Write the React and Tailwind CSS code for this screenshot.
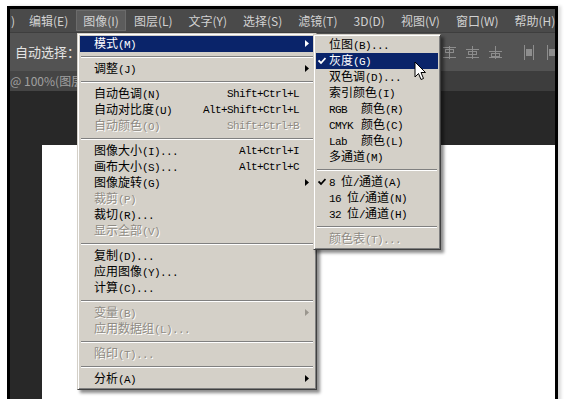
import React from "react";

const CJK = /([\u4e00-\u9fff：]+)/;
const MONO = "text-[11px] tracking-[-0.6px] font-['Liberation_Mono',monospace]";

function Label({ text, prefix }) {
  const parts = text.split(CJK).filter(Boolean);
  return (
    <span className="flex items-baseline whitespace-pre leading-[16px]">
      {prefix && <span className={`inline-block w-[32px] ${MONO}`}>{prefix}</span>}
      {parts.map((p, i) =>
        CJK.test(p) ? (
          <span key={i} className="text-[12px] font-['Noto_Sans_CJK_SC',sans-serif]">{p}</span>
        ) : (
          <span key={i} className={MONO}>{p}</span>
        )
      )}
    </span>
  );
}

function Arrow({ color }) {
  return (
    <svg width="4" height="7" viewBox="0 0 4 7" className="absolute right-[5px] top-[4px]">
      <path d="M0 0 L4 3.5 L0 7 Z" fill={color} />
    </svg>
  );
}

function Check({ color }) {
  return (
    <svg width="8" height="8" viewBox="0 0 8 8" className="absolute left-[2px] top-[4px]">
      <path d="M0.5 3.5 L3 6 L7.5 1" stroke={color} strokeWidth="1.8" fill="none" />
    </svg>
  );
}

function Sep() {
  return (
    <div className="h-[9px] flex items-center px-[1px]">
      <div className="w-full h-[2px] border-t border-t-[#808080] border-b border-b-white" />
    </div>
  );
}

function Item({ it, pl }) {
  const color = it.hl
    ? "text-white bg-[#0a246a]"
    : it.dis
    ? "text-[#8f8b84] [text-shadow:1px_1px_0_#ffffff]"
    : "text-black";
  return (
    <div className={`relative h-[16px] flex items-center ${pl} ${color}`}>
      {it.check && <Check color={it.hl ? "#ffffff" : "#000000"} />}
      <Label text={it.t} prefix={it.prefix} />
      {it.sc && <span className={`ml-auto pr-[15px] leading-[16px] ${MONO}`}>{it.sc}</span>}
      {it.arrow && <Arrow color={it.hl ? "#ffffff" : it.dis ? "#9a968e" : "#000000"} />}
    </div>
  );
}

const mainItems = [
  { t: "模式(M)", arrow: true, hl: true },
  "sep",
  { t: "调整(J)", arrow: true },
  "sep",
  { t: "自动色调(N)", sc: "Shift+Ctrl+L" },
  { t: "自动对比度(U)", sc: "Alt+Shift+Ctrl+L" },
  { t: "自动颜色(O)", sc: "Shift+Ctrl+B", dis: true },
  "sep",
  { t: "图像大小(I)...", sc: "Alt+Ctrl+I" },
  { t: "画布大小(S)...", sc: "Alt+Ctrl+C" },
  { t: "图像旋转(G)", arrow: true },
  { t: "裁剪(P)", dis: true },
  { t: "裁切(R)..." },
  { t: "显示全部(V)", dis: true },
  "sep",
  { t: "复制(D)..." },
  { t: "应用图像(Y)..." },
  { t: "计算(C)..." },
  "sep",
  { t: "变量(B)", arrow: true, dis: true },
  { t: "应用数据组(L)...", dis: true },
  "sep",
  { t: "陷印(T)...", dis: true },
  "sep",
  { t: "分析(A)", arrow: true },
];

const subItems = [
  { t: "位图(B)..." },
  { t: "灰度(G)", hl: true, check: true },
  { t: "双色调(D)..." },
  { t: "索引颜色(I)" },
  { t: "颜色(R)", prefix: "RGB" },
  { t: "颜色(C)", prefix: "CMYK" },
  { t: "颜色(L)", prefix: "Lab" },
  { t: "多通道(M)" },
  "sep",
  { t: "8 位/通道(A)", check: true },
  { t: "16 位/通道(N)" },
  { t: "32 位/通道(H)" },
  "sep",
  { t: "颜色表(T)...", dis: true },
];

const menuBox =
  "absolute bg-[#d4d0c8] border border-t-[#d4d0c8] border-l-[#d4d0c8] border-r-[#404040] border-b-[#404040] p-[2px] shadow-[inset_1px_1px_0_#ffffff,inset_-1px_-1px_0_#808080,3px_3px_3px_rgba(0,0,0,0.45)]";

function MenuBarItem({ children, active }) {
  return (
    <span
      className={`h-[21px] flex items-center ${
        active ? "bg-[#5c5c5c] border border-[#6b6b6b] px-[6px]" : "px-[8px]"
      }`}
    >
      {children}
    </span>
  );
}

function OptIcons() {
  return (
    <div className="ml-auto -mr-[4px] flex items-center shrink-0">
      {[0, 1, 2].map((i) => (
        <svg
          key={i}
          width="15"
          height="15"
          viewBox="0 0 15 15"
          className={`text-[#8d8d8d] ${i > 0 ? "ml-[8px]" : ""}`}
        >
          <g stroke="currentColor" strokeWidth="1" fill="none">
            <path
              d={
                i === 0
                  ? "M1 2.5 H14 M1 12.5 H14"
                  : i === 1
                  ? "M1 4.5 H14 M1 12.5 H14"
                  : "M1 6.5 H14 M1 12.5 H14"
              }
            />
            <rect x="3.5" y={i === 0 ? 4.5 : i === 1 ? 6.5 : 8.5} width="8" height="3" />
            <path d="M7.5 1 V14" />
          </g>
        </svg>
      ))}
      {[0, 1].map((i) => (
        <svg
          key={i}
          width="14"
          height="17"
          viewBox="0 0 14 17"
          className={`text-[#8d8d8d] ${i === 0 ? "ml-[19px]" : "ml-[9px]"}`}
        >
          <g stroke="currentColor" strokeWidth="1" fill="none">
            <path d="M2.5 1 V16 M11.5 1 V16" />
            <rect x="4.5" y="5.5" width="5" height="6" fill="currentColor" />
          </g>
        </svg>
      ))}
    </div>
  );
}

export default function App() {
  return (
    <div className="relative w-[565px] h-[399px] overflow-hidden bg-white font-['Noto_Sans_CJK_SC',sans-serif]">
      <div className="ml-[7px] mt-[6px] w-[551px] h-[400px] border-l-[3px] border-t-[3px] border-r-[3px] border-black flex flex-col bg-[#282828] shadow-[3px_0_3px_rgba(0,0,0,0.15)]">
        {/* menu bar */}
        <div className="h-[24px] bg-[#4a4a4a] flex items-center text-[12px] text-[#d2d2d2] border-b border-[#3e3e3e] whitespace-nowrap overflow-hidden">
          <span className="ml-[1px]">)</span>
          <span className="ml-[6px] flex items-center">
            <MenuBarItem>编辑(E)</MenuBarItem>
            <MenuBarItem active>图像(I)</MenuBarItem>
            <MenuBarItem>图层(L)</MenuBarItem>
            <MenuBarItem>文字(Y)</MenuBarItem>
            <MenuBarItem>选择(S)</MenuBarItem>
            <MenuBarItem>滤镜(T)</MenuBarItem>
            <MenuBarItem>3D(D)</MenuBarItem>
            <MenuBarItem>视图(V)</MenuBarItem>
            <MenuBarItem>窗口(W)</MenuBarItem>
            <MenuBarItem>帮助(H)</MenuBarItem>
          </span>
        </div>
        {/* options bar */}
        <div className="h-[38px] bg-[#535353] flex items-center pl-[5px] text-[13px] text-[#e4e4e4] overflow-hidden">
          <span className="shrink-0">自动选择：</span>
          <OptIcons />
        </div>
        {/* tab bar */}
        <div className="h-[20px] bg-[#3d3d3d] flex items-end">
          <div className="h-[20px] w-[90px] bg-[#454545] flex items-center text-[12px] text-[#a0a0a0] whitespace-nowrap">
            @ 100%(图层
          </div>
        </div>
        {/* canvas */}
        <div className="flex-1 pt-[54px] pl-[32px] flex flex-col">
          <div className="flex-1 bg-white" />
        </div>
      </div>

      {/* main dropdown */}
      <div className={`${menuBox} left-[77px] top-[33px] w-[240px]`}>
        {mainItems.map((it, i) =>
          it === "sep" ? <Sep key={i} /> : <Item key={i} it={it} pl="pl-[14px]" />
        )}
      </div>

      {/* submenu */}
      <div className={`${menuBox} left-[313px] top-[34px] w-[128px]`}>
        {subItems.map((it, i) =>
          it === "sep" ? <Sep key={i} /> : <Item key={i} it={it} pl="pl-[13px]" />
        )}
      </div>

      {/* cursor */}
      <svg width="13" height="21" viewBox="0 0 13 21" className="absolute left-[414px] top-[61px]">
        <path
          d="M1 1 L1 16 L4.5 12.5 L7 18.5 L9.5 17.5 L7 11.5 L11.5 11.5 Z"
          fill="#ffffff"
          stroke="#000000"
          strokeWidth="1"
        />
      </svg>
    </div>
  );
}
